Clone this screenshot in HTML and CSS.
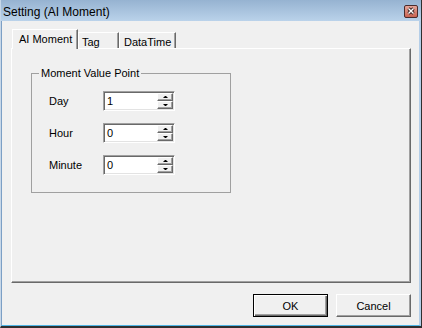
FILE: index.html
```html
<!DOCTYPE html>
<html lang="en">
<head>
    <meta charset="UTF-8">
    <title>Setting (AI Moment)</title>
    <link rel="stylesheet" href="styles.css">
</head>
<body>
    <div class="window">
        <div class="titlebar">
            <span class="title">Setting (AI Moment)</span>
            <svg class="close" width="14" height="13" viewBox="0 0 14 13">
                <defs>
                    <linearGradient id="closeFill" x1="0" y1="0" x2="0" y2="1">
                        <stop offset="0" stop-color="#e7a89c"/>
                        <stop offset="1" stop-color="#c8604e"/>
                    </linearGradient>
                </defs>
                <rect x="0.5" y="0.5" width="13" height="12" rx="1.5" fill="url(#closeFill)" stroke="#4b2c2c"/>
                <path d="M4.5 3.5 L9.5 8.5 M9.5 3.5 L4.5 8.5" stroke="#3a2222" stroke-width="3.2" fill="none"/>
                <path d="M4.5 3.5 L9.5 8.5 M9.5 3.5 L4.5 8.5" stroke="#ffffff" stroke-width="1.4" fill="none"/>
            </svg>
        </div>
        <div class="client">
            <div class="tabs">
                <div class="tab active">AI Moment</div>
                <div class="tab tag">Tag</div>
                <div class="tab datatime">DataTime</div>
            </div>
            <div class="panel">
                <fieldset class="group">
                    <legend>Moment Value Point</legend>
                    <div class="row">
                        <label>Day</label>
                        <div class="spin">
                            <span class="val">1</span>
                            <div class="arrows"><span class="up"></span><span class="down"></span></div>
                        </div>
                    </div>
                    <div class="row">
                        <label>Hour</label>
                        <div class="spin">
                            <span class="val">0</span>
                            <div class="arrows"><span class="up"></span><span class="down"></span></div>
                        </div>
                    </div>
                    <div class="row">
                        <label>Minute</label>
                        <div class="spin">
                            <span class="val">0</span>
                            <div class="arrows"><span class="up"></span><span class="down"></span></div>
                        </div>
                    </div>
                </fieldset>
            </div>
            <div class="buttons">
                <button class="btn default">OK</button>
                <button class="btn">Cancel</button>
            </div>
        </div>
    </div>
</body>
</html>
```

FILE: styles.css
```css
html, body {
    margin: 0;
    padding: 0;
    background: #f0f0f0;
    font-family: "Liberation Sans", Arial, sans-serif;
    font-size: 11px;
    color: #000;
    overflow: hidden;
}

.window {
    width: 422px;
    height: 328px;
    box-sizing: border-box;
    display: flex;
    flex-direction: column;
    background: #f0f0f0;
    border-left: 1px solid #c7d7e8;
    border-right: 1px solid #2f2f2f;
    border-bottom: 2px solid #2f2f2f;
}

.titlebar {
    flex: none;
    height: 21px;
    box-sizing: border-box;
    display: flex;
    justify-content: space-between;
    align-items: flex-start;
    padding: 3px 3px 0 2px;
    background: linear-gradient(#96b3d1, #bad2ea);
}

.title {
    font-size: 12px;
    line-height: 18px;
}

.close {
    display: block;
    margin-top: 2px;
}

.client {
    flex: 1;
    display: flex;
    flex-direction: column;
    border-left: 1px solid #7c9fc5;
    border-right: 2px solid #b4cee8;
    border-bottom: 1px solid #4fb6e6;
    padding: 0 8px 0 9px;
}

/* tabs */
.tabs {
    display: flex;
    align-items: flex-end;
    height: 19px;
    margin-top: 8px;
    padding-left: 1px;
}

.tab {
    box-sizing: border-box;
    height: 16px;
    padding: 3px 0 0 3px;
    line-height: 13px;
    white-space: nowrap;
    overflow: hidden;
    border-top: 1px solid #fff;
    border-left: 1px solid #fff;
    border-right: 1px solid #696969;
    box-shadow: inset -1px 0 #a0a0a0;
}

.tab.active {
    position: relative;
    z-index: 1;
    width: 66px;
    height: 20px;
    margin-bottom: -1px;
    padding: 3px 0 0 6px;
    background: #f0f0f0;
}

.tab.tag {
    width: 41px;
}

.tab.datatime {
    width: 57px;
    padding-left: 4px;
}

.panel {
    box-sizing: border-box;
    height: 235px;
    border-top: 1px solid #fff;
    border-left: 1px solid #fff;
    border-right: 1px solid #696969;
    border-bottom: 1px solid #696969;
    box-shadow: inset -1px -1px #a0a0a0;
}

/* group box */
.group {
    box-sizing: border-box;
    width: 200px;
    height: 126px;
    margin: 18px 0 0 19px;
    padding: 11px 0 0 0;
    border: 1px solid #a0a0a0;
}

.group legend {
    margin-left: 7px;
    padding: 0 2px;
    line-height: 13px;
}

.row {
    display: flex;
    align-items: center;
    height: 20px;
    margin-bottom: 12px;
    padding-left: 17px;
}

.row label {
    width: 54px;
}

.spin {
    box-sizing: border-box;
    width: 72px;
    height: 20px;
    display: flex;
    padding: 1px;
    background: #fff;
    border-top: 1px solid #a0a0a0;
    border-left: 1px solid #a0a0a0;
    border-bottom: 1px solid #fff;
    border-right: 1px solid #fff;
    box-shadow: inset 1px 1px #696969, inset -1px -1px #e3e3e3;
}

.val {
    flex: 1;
    padding-left: 2px;
    line-height: 16px;
}

.arrows {
    width: 16px;
    display: flex;
    flex-direction: column;
}

.arrows span {
    box-sizing: border-box;
    height: 8px;
    display: flex;
    align-items: center;
    justify-content: center;
    background: #f0f0f0;
    border-top: 1px solid #fff;
    border-left: 1px solid #fff;
    border-right: 1px solid #696969;
    border-bottom: 1px solid #696969;
    box-shadow: inset -1px -1px #a0a0a0;
}

.arrows span::after {
    content: "";
    width: 1px;
    height: 0;
    border-left: 2px solid transparent;
    border-right: 2px solid transparent;
}

.arrows .up::after {
    border-bottom: 2px solid #000;
}

.arrows .down::after {
    border-top: 2px solid #000;
}

/* dialog buttons */
.buttons {
    display: flex;
    justify-content: flex-end;
    gap: 8px;
    margin-top: 11px;
}

.btn {
    box-sizing: border-box;
    width: 75px;
    height: 23px;
    padding: 0;
    font-family: inherit;
    font-size: 11px;
    color: #000;
    background: #f0f0f0;
    border: 1px solid;
    border-color: #fff #696969 #696969 #fff;
    box-shadow: inset -1px -1px #a0a0a0;
}

.btn.default {
    border-color: #000;
    box-shadow: inset 1px 1px #fff, inset -1px -1px #696969, inset -2px -2px #a0a0a0;
}
```
